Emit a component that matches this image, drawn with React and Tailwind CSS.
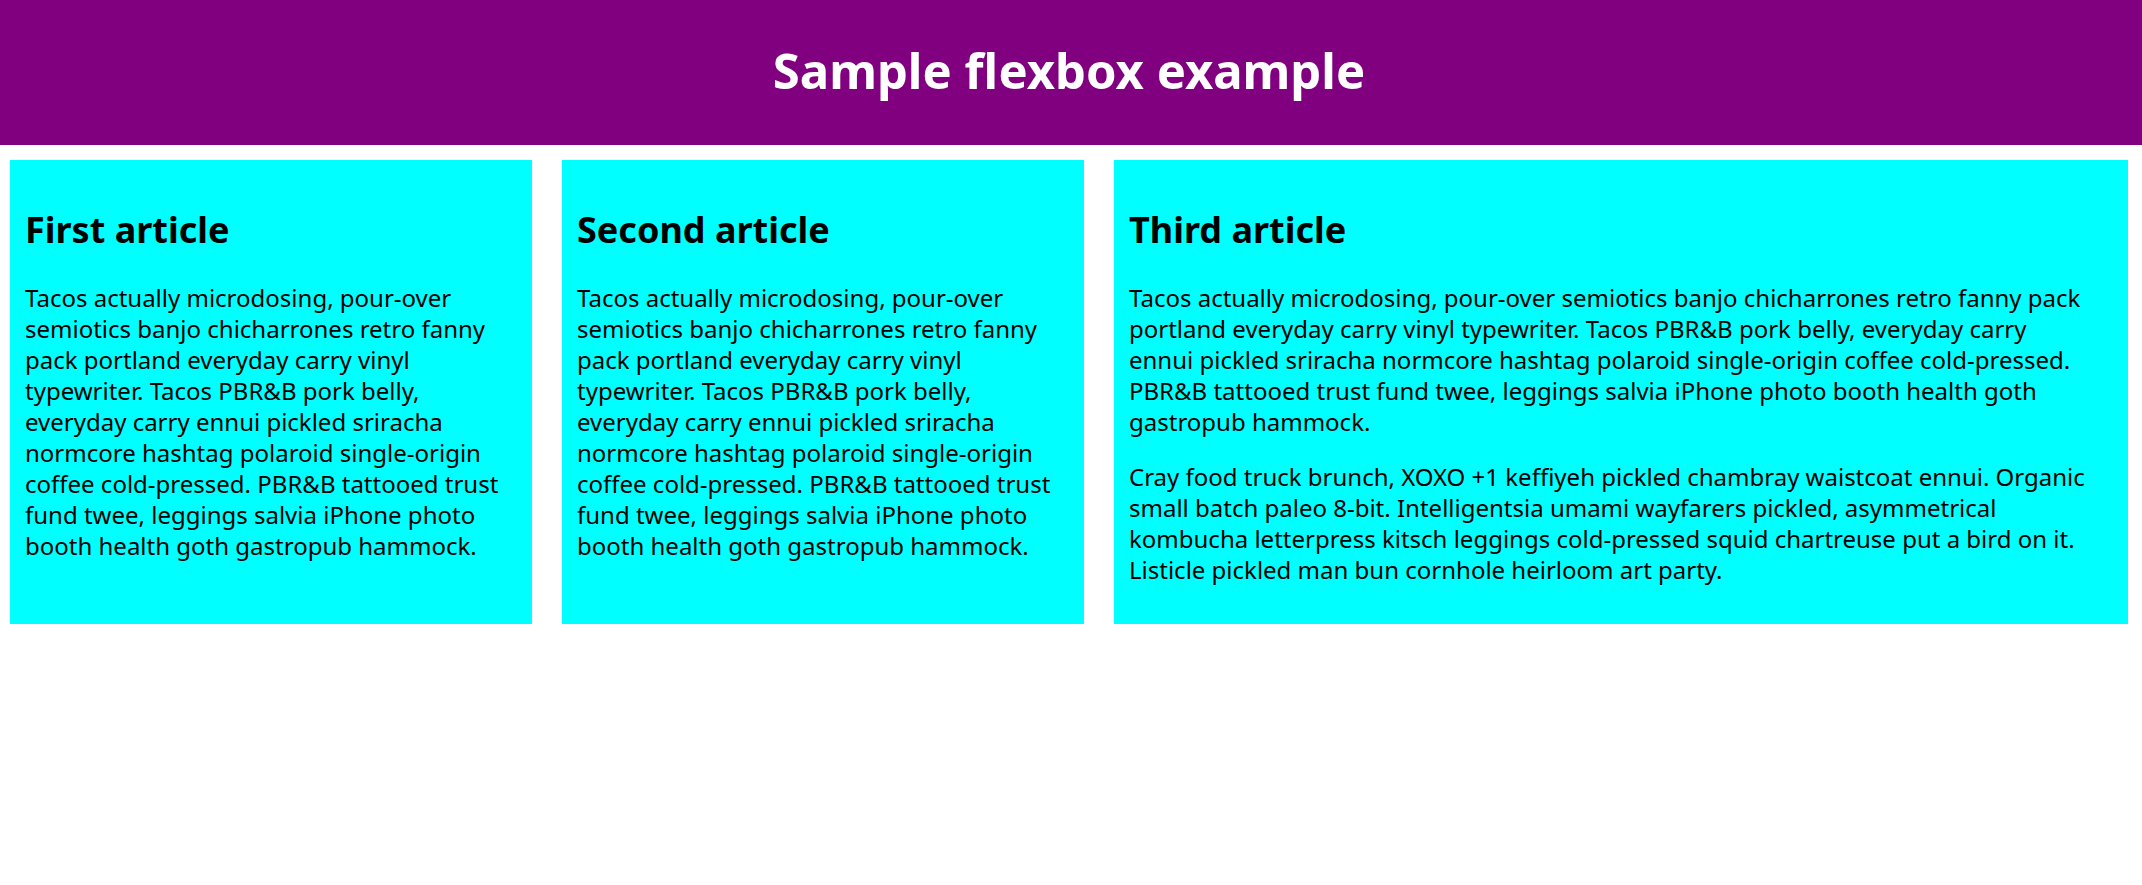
const tacos =
  "Tacos actually microdosing, pour-over semiotics banjo chicharrones retro fanny pack portland everyday carry vinyl typewriter. Tacos PBR&B pork belly, everyday carry ennui pickled sriracha normcore hashtag polaroid single-origin coffee cold-pressed. PBR&B tattooed trust fund twee, leggings salvia iPhone photo booth health goth gastropub hammock.";

const cray =
  "Cray food truck brunch, XOXO +1 keffiyeh pickled chambray waistcoat ennui. Organic small batch paleo 8-bit. Intelligentsia umami wayfarers pickled, asymmetrical kombucha letterpress kitsch leggings cold-pressed squid chartreuse put a bird on it. Listicle pickled man bun cornhole heirloom art party.";

const articles = [
  { title: "First article", paragraphs: [tacos], size: "flex-1" },
  { title: "Second article", paragraphs: [tacos], size: "flex-1" },
  { title: "Third article", paragraphs: [tacos, cray], size: "flex-2" },
];

function Article({ title, paragraphs, size }) {
  return (
    <article className={`${size} bg-[#00ffff] px-[15px] pt-[46px] pb-[39px]`}>
      <h2 className="mb-7 text-[36px] leading-[48px] font-bold">{title}</h2>
      <div className="flex flex-col gap-6">
        {paragraphs.map((text) => (
          <p key={text} className="max-w-[960px] text-[24px] leading-[31px]">
            {text}
          </p>
        ))}
      </div>
    </article>
  );
}

export default function App() {
  return (
    <div className="min-h-screen bg-white font-['Noto_Sans',sans-serif] text-black">
      <header className="bg-[#800080] pt-[38px] pr-[14px] pb-[43px] pl-[10px]">
        <h1 className="text-center text-[49px] leading-[64px] font-bold text-white">
          Sample flexbox example
        </h1>
      </header>
      <main className="flex gap-[30px] pt-[15px] pr-[14px] pl-[10px]">
        {articles.map((article) => (
          <Article key={article.title} {...article} />
        ))}
      </main>
    </div>
  );
}
